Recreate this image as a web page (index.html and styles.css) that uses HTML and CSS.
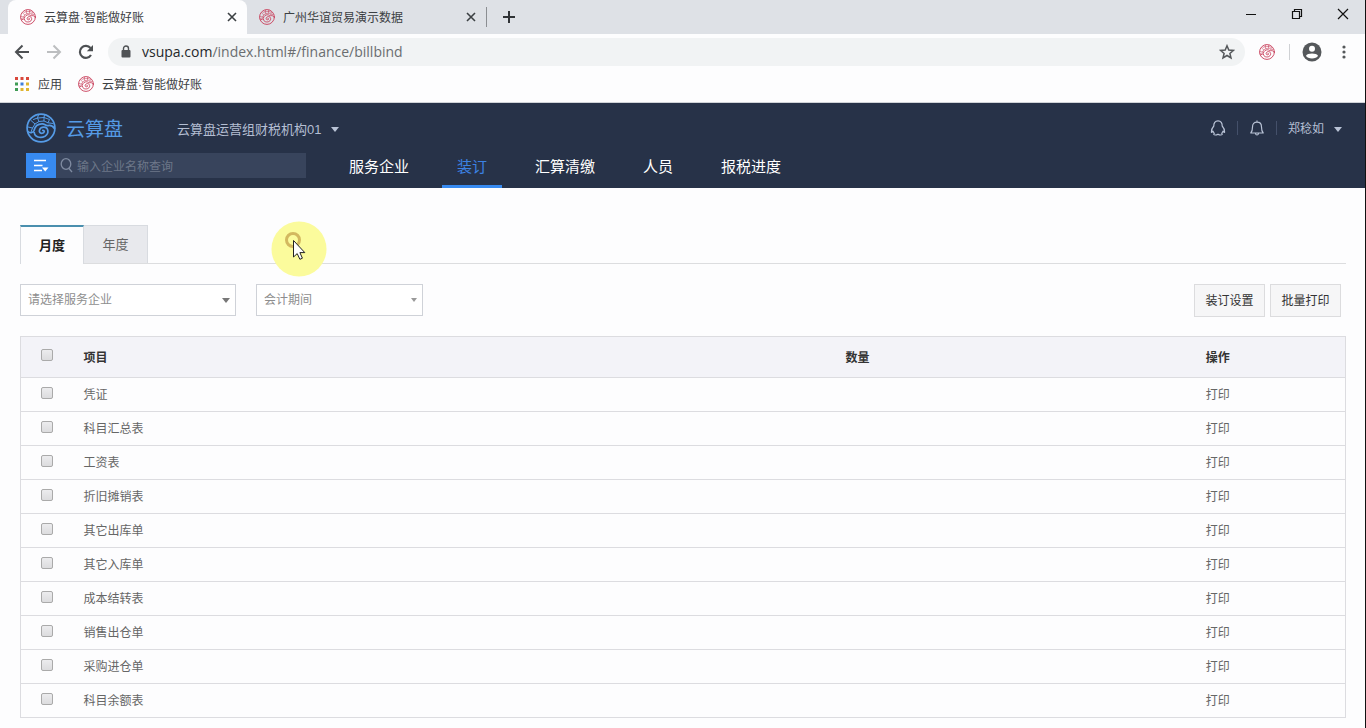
FILE: index.html
```html
<!DOCTYPE html>
<html lang="zh-CN">
<head>
<meta charset="utf-8">
<title>云算盘·智能做好账</title>
<link rel="stylesheet" href="styles.css">
</head>
<body>
<svg class="sprite" aria-hidden="true">
  <symbol id="shell" viewBox="0 0 30 30">
    <g fill="none" stroke="currentColor" stroke-linecap="round" stroke-linejoin="round">
      <circle cx="15" cy="15" r="13.900" stroke-width="1.700"/>
      <path stroke-width="1.700" d="M2 18.500C4 20.500 7 20 8 17.500C9 13 12.500 10.600 16.500 10.800C19 11 19.500 13 22 12.600C25 12 27 13 28.400 15.500M8.300 19.500C8.500 24 14.500 25.600 19 23.300C23.500 20.500 22.500 14.300 17.800 14.200C13 14.200 11.800 20 15.700 20.300C18.800 20.300 19 17.300 16.800 17.400"/>
      <path stroke-width="1" d="M2 14L6.500 15L9 11L5 7.500M9 11L13 8.500L11.500 5L7.500 6.500M11.500 5L12.500 1.800M13 8.500L18 8L18 4.500L12 5M18 4.500L18.500 1.800M18 8L22 9.800L23.500 6.500L18 4.500M22 9.800L27 10.500M6.500 15L5 19"/>
    </g>
  </symbol>
</svg>

<header class="browser">
  <div class="tabstrip">
    <div class="btab btab-active">
      <svg class="favicon"><use href="#shell"/></svg>
      <span class="btab-title">云算盘·智能做好账</span>
      <button class="plain" aria-label="关闭标签页"><svg width="10" height="10" viewBox="0 0 10 10"><path d="M1 1L9 9M9 1L1 9" stroke="#3c4043" stroke-width="1.600"/></svg></button>
    </div>
    <div class="btab">
      <svg class="favicon"><use href="#shell"/></svg>
      <span class="btab-title">广州华谊贸易演示数据</span>
      <button class="plain" aria-label="关闭标签页"><svg width="10" height="10" viewBox="0 0 10 10"><path d="M1 1L9 9M9 1L1 9" stroke="#3c4043" stroke-width="1.600"/></svg></button>
    </div>
    <span class="tab-divider"></span>
    <button class="plain new-tab" aria-label="新标签页"><svg width="12" height="12" viewBox="0 0 12 12"><path d="M6 0V12M0 6H12" stroke="#303336" stroke-width="2"/></svg></button>
    <div class="window-controls">
      <button class="plain" aria-label="最小化"><svg width="12" height="12" viewBox="0 0 12 12"><path d="M1 6.500H11" stroke="#111"/></svg></button>
      <button class="plain" aria-label="还原"><svg width="12" height="12" viewBox="0 0 12 12" fill="none" stroke="#111" stroke-width="1.200"><path d="M1.500 3.500H8.500V10.500H1.500ZM3.500 3.500V1.500H10.500V8.500H8.500"/></svg></button>
      <button class="plain" aria-label="关闭"><svg width="12" height="12" viewBox="0 0 12 12"><path d="M1 1L11 11M11 1L1 11" stroke="#111" stroke-width="1.200"/></svg></button>
    </div>
  </div>

  <div class="toolbar">
    <div class="nav-buttons">
      <button class="plain" aria-label="后退"><svg width="16" height="16" viewBox="0 0 16 16" fill="none" stroke="#4d5053" stroke-width="2"><path d="M15 8H2.500M8.500 1.500L2 8L8.500 14.500"/></svg></button>
      <button class="plain" aria-label="前进"><svg width="16" height="16" viewBox="0 0 16 16" fill="none" stroke="#bcbec0" stroke-width="2"><path d="M1 8H13.500M7.500 1.500L14 8L7.500 14.500"/></svg></button>
      <button class="plain" aria-label="重新加载"><svg width="16" height="16" viewBox="0 0 16 16"><path d="M13 11A6 6 0 1 1 12.500 4" fill="none" stroke="#4d5053" stroke-width="2.200"/><path d="M15 1V7.200H8.800Z" fill="#4d5053"/></svg></button>
    </div>
    <div class="omnibox">
      <svg width="10" height="13" viewBox="0 0 10 13"><rect x="0.500" y="5" width="9" height="7.500" rx="1" fill="#505356"/><path d="M2.500 6V3.500A2.500 2.500 0 0 1 7.500 3.500V6" fill="none" stroke="#505356" stroke-width="1.400"/></svg>
      <span class="url"><b>vsupa.com</b>/index.html#/finance/billbind</span>
      <button class="plain" aria-label="收藏"><svg width="16" height="16" viewBox="0 0 16 16"><path d="M8 1.800L9.800 6.100L14.400 6.400L10.900 9.400L12 14L8 11.500L4 14L5.100 9.400L1.600 6.400L6.200 6.100Z" fill="none" stroke="#55585b" stroke-width="1.500"/></svg></button>
    </div>
    <svg class="favicon"><use href="#shell"/></svg>
    <span class="tool-divider"></span>
    <button class="plain profile" aria-label="个人资料"><svg width="20" height="20" viewBox="0 0 20 20"><circle cx="10" cy="10" r="9.500" fill="#55585b"/><circle cx="10" cy="6.800" r="3" fill="#fff"/><path d="M4 13.800C5.200 10.800 14.800 10.800 16 13.800C14.500 17.500 5.500 17.500 4 13.800Z" fill="#fff"/></svg></button>
    <button class="plain" aria-label="菜单"><svg width="4" height="14" viewBox="0 0 4 14" fill="#55585b"><circle cx="2" cy="2" r="1.600"/><circle cx="2" cy="7" r="1.600"/><circle cx="2" cy="12" r="1.600"/></svg></button>
  </div>

  <div class="bookmarks">
    <a href="#"><svg width="14" height="14" viewBox="0 0 14 14"><path fill="#d9483b" d="M0 0h3v3H0zM5.500 0h3v3h-3zM11 0h3v3h-3z"/><path fill="#3f9b55" d="M0 5.500h3v3H0zM0 11h3v3H0z"/><path fill="#3f7fdc" d="M5.500 5.500h3v3h-3z"/><path fill="#e0b530" d="M11 5.500h3v3h-3zM5.500 11h3v3h-3zM11 11h3v3h-3z"/></svg><span>应用</span></a>
    <a href="#" class="bookmark-site"><svg class="favicon"><use href="#shell"/></svg><span>云算盘·智能做好账</span></a>
  </div>
</header>

<div class="app-header">
  <div class="app-top">
    <a class="brand" href="#"><svg width="30" height="30"><use href="#shell"/></svg><span>云算盘</span></a>
    <button class="plain company">云算盘运营组财税机构01<span class="caret"></span></button>
    <div class="user-tools">
      <button class="plain" aria-label="客服"><svg width="16" height="16" viewBox="0 0 16 16" fill="none" stroke="#b9c3d6" stroke-width="1.200" stroke-linejoin="round"><path d="M8 .8C5 .8 3.700 3 3.800 6C2.500 7.500 1.200 9.500 1.400 12.200C2 12.600 2.600 11.800 3 11.200C3.300 12.200 3.800 12.900 4.300 13.400C3.300 14.200 3.800 15 5.200 15C6.500 15 7.300 14.700 8 14.200C8.700 14.700 9.500 15 10.800 15C12.200 15 12.700 14.200 11.700 13.400C12.200 12.900 12.700 12.200 13 11.200C13.400 11.800 14 12.600 14.600 12.200C14.800 9.500 13.500 7.500 12.200 6C12.300 3 11 .8 8 .8Z"/></svg></button>
      <span class="user-divider"></span>
      <button class="plain" aria-label="通知"><svg width="16" height="16" viewBox="0 0 16 16" fill="none" stroke="#b9c3d6" stroke-width="1.200" stroke-linejoin="round"><path d="M1.800 13H14.200C12.800 11.500 12.500 10 12.500 7C12.500 4 10.800 2.200 8 2.200C5.200 2.200 3.500 4 3.500 7C3.500 10 3.200 11.500 1.800 13ZM8 2.200V.5M6.500 13.500C6.800 15.500 9.200 15.500 9.500 13.500"/></svg></button>
      <span class="user-divider"></span>
      <button class="plain username">郑稔如<span class="caret"></span></button>
    </div>
  </div>
  <div class="app-bottom">
    <div class="search">
      <button class="plain filter" aria-label="筛选"><svg width="16" height="14" viewBox="0 0 16 14"><path d="M1 1.500H13M1 6.500H9.500M1 11.500H9" stroke="#fff" stroke-width="1.500"/><path d="M9 8.500H15.500L12.200 12.500Z" fill="#fff"/></svg></button>
      <svg class="search-icon" width="13" height="15" viewBox="0 0 13 15" fill="none" stroke="#7f8ba1" stroke-width="1.300"><ellipse cx="6" cy="6" rx="4.800" ry="5.300"/><path d="M8.800 10.300L12 14"/></svg>
      <input type="text" placeholder="输入企业名称查询" aria-label="输入企业名称查询">
    </div>
    <nav class="main-nav">
      <a href="#">服务企业</a>
      <a href="#" class="current">装订</a>
      <a href="#">汇算清缴</a>
      <a href="#">人员</a>
      <a href="#">报税进度</a>
    </nav>
  </div>
</div>

<main class="content">
  <div class="tabs" role="tablist">
    <button class="tab tab-selected" role="tab" aria-selected="true">月度</button>
    <button class="tab" role="tab" aria-selected="false">年度</button>
  </div>

  <div class="filters">
    <label class="select select-company"><select aria-label="服务企业"><option>请选择服务企业</option></select></label>
    <label class="select select-period"><select aria-label="会计期间"><option>会计期间</option></select></label>
    <div class="actions">
      <button class="action">装订设置</button>
      <button class="action">批量打印</button>
    </div>
  </div>

  <table class="grid">
    <colgroup><col class="col-check"><col class="col-item"><col class="col-count"><col></colgroup>
    <thead>
      <tr><th><input type="checkbox" aria-label="全选"></th><th>项目</th><th>数量</th><th>操作</th></tr>
    </thead>
    <tbody>
      <tr><td><input type="checkbox" aria-label="凭证"></td><td>凭证</td><td></td><td><a href="#">打印</a></td></tr>
      <tr><td><input type="checkbox" aria-label="科目汇总表"></td><td>科目汇总表</td><td></td><td><a href="#">打印</a></td></tr>
      <tr><td><input type="checkbox" aria-label="工资表"></td><td>工资表</td><td></td><td><a href="#">打印</a></td></tr>
      <tr><td><input type="checkbox" aria-label="折旧摊销表"></td><td>折旧摊销表</td><td></td><td><a href="#">打印</a></td></tr>
      <tr><td><input type="checkbox" aria-label="其它出库单"></td><td>其它出库单</td><td></td><td><a href="#">打印</a></td></tr>
      <tr><td><input type="checkbox" aria-label="其它入库单"></td><td>其它入库单</td><td></td><td><a href="#">打印</a></td></tr>
      <tr><td><input type="checkbox" aria-label="成本结转表"></td><td>成本结转表</td><td></td><td><a href="#">打印</a></td></tr>
      <tr><td><input type="checkbox" aria-label="销售出仓单"></td><td>销售出仓单</td><td></td><td><a href="#">打印</a></td></tr>
      <tr><td><input type="checkbox" aria-label="采购进仓单"></td><td>采购进仓单</td><td></td><td><a href="#">打印</a></td></tr>
      <tr><td><input type="checkbox" aria-label="科目余额表"></td><td>科目余额表</td><td></td><td><a href="#">打印</a></td></tr>
    </tbody>
  </table>
</main>

<svg class="pointer" width="56" height="56" viewBox="0 0 56 56" aria-hidden="true">
  <circle cx="28" cy="28" r="27.500" fill="#fbfb9c"/>
  <path d="M1 42.500H55" stroke="#dcdc94" clip-path="circle(27px at 28px 28px)"/>
  <circle cx="22" cy="19" r="6.500" fill="none" stroke="#d3b85f" stroke-width="3"/>
  <path d="M22.500 19.500V36L26.200 32.600L28.900 38.300L31.400 37.200L28.900 31.600H33.800Z" fill="#fff" stroke="#222" stroke-width="1"/>
</svg>
</body>
</html>
```

FILE: styles.css
```css
* { box-sizing: border-box; }

body {
  margin: 0;
  min-height: 100vh;
  border-right: 1px solid #111;
  background: #fdfdfe;
  color: #666;
  font: 12px/16px "Liberation Sans", "Noto Sans CJK SC", sans-serif;
}

a { color: inherit; text-decoration: none; }
button, input, select { font: inherit; color: inherit; }
svg { display: block; flex: none; }

.sprite { display: none; }

.plain {
  display: flex;
  align-items: center;
  justify-content: center;
  padding: 0;
  border: 0;
  background: none;
}

.favicon { width: 16px; height: 16px; color: #c93f5b; }

/* Browser chrome */
.browser { border-bottom: 1px solid #d0d3d8; color: #3c4043; }

.tabstrip {
  display: flex;
  align-items: center;
  height: 34px;
  padding-left: 8px;
  background: #dee1e6;
}

.btab {
  display: flex;
  align-items: center;
  gap: 8px;
  width: 239px;
  height: 34px;
  padding: 0 10px 0 12px;
}

.btab-active { border-radius: 8px 8px 0 0; background: #fdfdfe; }
.btab-title { flex: 1; padding-top: 2px; }
.tab-divider { width: 1px; height: 20px; background: #8b8e92; }
.new-tab { margin-left: 16px; }

.window-controls {
  display: flex;
  gap: 34px;
  height: 28px;
  margin: 0 16px auto auto;
}

.toolbar {
  display: flex;
  align-items: center;
  height: 35px;
  padding: 0 19px 0 14px;
  background: #fdfdfe;
}

.nav-buttons { display: flex; gap: 16px; }

.omnibox {
  display: flex;
  flex: 1;
  align-items: center;
  gap: 11px;
  height: 28px;
  margin: 0 14px;
  padding: 0 10px 0 13px;
  border-radius: 14px;
  background: #f1f3f4;
}

.url {
  flex: 1;
  color: #6a6d70;
  font: 14px/20px "Open Sans", "Noto Sans", sans-serif;
}

.url b { color: #25282b; font-weight: normal; }
.tool-divider { width: 1px; height: 16px; margin: 0 12px 0 14px; background: #cfd1d4; }
.profile { margin-right: 20px; }

.bookmarks {
  display: flex;
  align-items: center;
  gap: 16px;
  height: 33px;
  padding: 0 15px 4px;
  background: #fdfdfe;
}

.bookmarks a { display: flex; align-items: center; gap: 9px; }
.bookmarks .bookmark-site { gap: 8px; }
.bookmarks span { padding-top: 2px; }

/* Application header */
.app-header { background: #273248; color: #b4bed2; }

.app-top {
  display: flex;
  align-items: center;
  height: 50px;
  padding: 0 23px 0 26px;
}

.brand {
  display: flex;
  align-items: center;
  gap: 10px;
  margin-right: 54px;
  color: #559be6;
  font-size: 19px;
  line-height: 24px;
}

.brand span { padding-top: 3px; }
.company { gap: 10px; padding-top: 3px; font-size: 13px; }

.caret {
  border: 4px solid transparent;
  border-top: 5px solid #b9c3d6;
  border-bottom: 0;
}

.user-tools { display: flex; align-items: center; gap: 11px; margin-left: auto; }
.user-divider { width: 1px; height: 14px; background: #44506a; }
.username { gap: 10px; padding-top: 2px; }

.app-bottom {
  display: flex;
  height: 35px;
  padding-left: 26px;
}

.search {
  display: flex;
  align-items: center;
  width: 280px;
  height: 25px;
  background: #38445c;
}

.filter { width: 30px; height: 25px; background: #378af0; }
.search-icon { margin: 0 4px; }

.search input {
  flex: 1;
  min-width: 0;
  padding: 2px 0 0;
  border: 0;
  outline: 0;
  background: none;
}

.search input::placeholder { color: #6d7789; opacity: 1; }

.main-nav { display: flex; gap: 18px; margin-left: 28px; }

.main-nav a {
  height: 35px;
  padding: 3px 15px 0;
  border-bottom: 3px solid transparent;
  color: #fff;
  font-size: 15px;
  line-height: 22px;
}

.main-nav .current { border-color: #378af0; color: #3c82e4; }

/* Page content */
.content { padding: 37px 19px 10px 20px; }

.tabs { display: flex; border-bottom: 1px solid #dcdddf; }

.tab {
  width: 64px;
  height: 38px;
  padding: 0;
  border: 1px solid #d8dbe0;
  border-width: 1px 1px 0 0;
  background: #e8e9ed;
  font-size: 13px;
}

.tab-selected {
  height: 39px;
  margin-bottom: -1px;
  border-top: 2px solid #4a8fae;
  border-left-width: 1px;
  background: #fdfdfe;
  color: #222;
  font-weight: bold;
}

.filters {
  display: flex;
  align-items: flex-start;
  gap: 20px;
  padding: 20px 5px 19px 0;
}

.select { display: grid; align-items: center; }
.select select, .select::after { grid-area: 1 / 1; }

.select select {
  width: 100%;
  height: 32px;
  padding: 0 7px;
  border: 1px solid #cfd2d8;
  appearance: none;
  background: #fff;
  color: #8e8e8e;
}

.select::after {
  content: "";
  justify-self: end;
  margin-right: 6px;
  border: 4px solid transparent;
  border-top: 5px solid #777;
  border-bottom: 0;
  pointer-events: none;
}

.select-company { width: 216px; }
.select-period { width: 167px; }
.select-period::after { border-width: 4px 3px 0; border-top-color: #999; }

.actions { display: flex; gap: 5px; margin-left: auto; }

.action {
  width: 71px;
  height: 33px;
  padding: 0;
  border: 1px solid #dcdcde;
  background: #f6f6f7;
  color: #333;
}

.grid {
  width: 100%;
  border: 1px solid #dcdce0;
  border-collapse: collapse;
  table-layout: fixed;
}

.col-check { width: 55px; }
.col-item { width: 57.5%; }
.col-count { width: 27.2%; }

.grid th, .grid td {
  height: 34px;
  padding: 0 8px;
  border-bottom: 1px solid #dcdce0;
  text-align: left;
}

.grid th { height: 41px; padding-top: 2px; background: #f3f3f8; color: #333; }
.grid th:first-child, .grid td:first-child { padding: 0 0 4px 20px; }

.grid input {
  display: block;
  width: 12px;
  height: 12px;
  margin: 0;
  border: 1px solid #aaa;
  border-radius: 2px;
  appearance: none;
  background: linear-gradient(#ececee, #dcdcde);
}

.grid input:checked { background: #378af0; }

/* Highlighted mouse pointer */
.pointer { position: absolute; top: 221px; left: 271px; pointer-events: none; }
```
